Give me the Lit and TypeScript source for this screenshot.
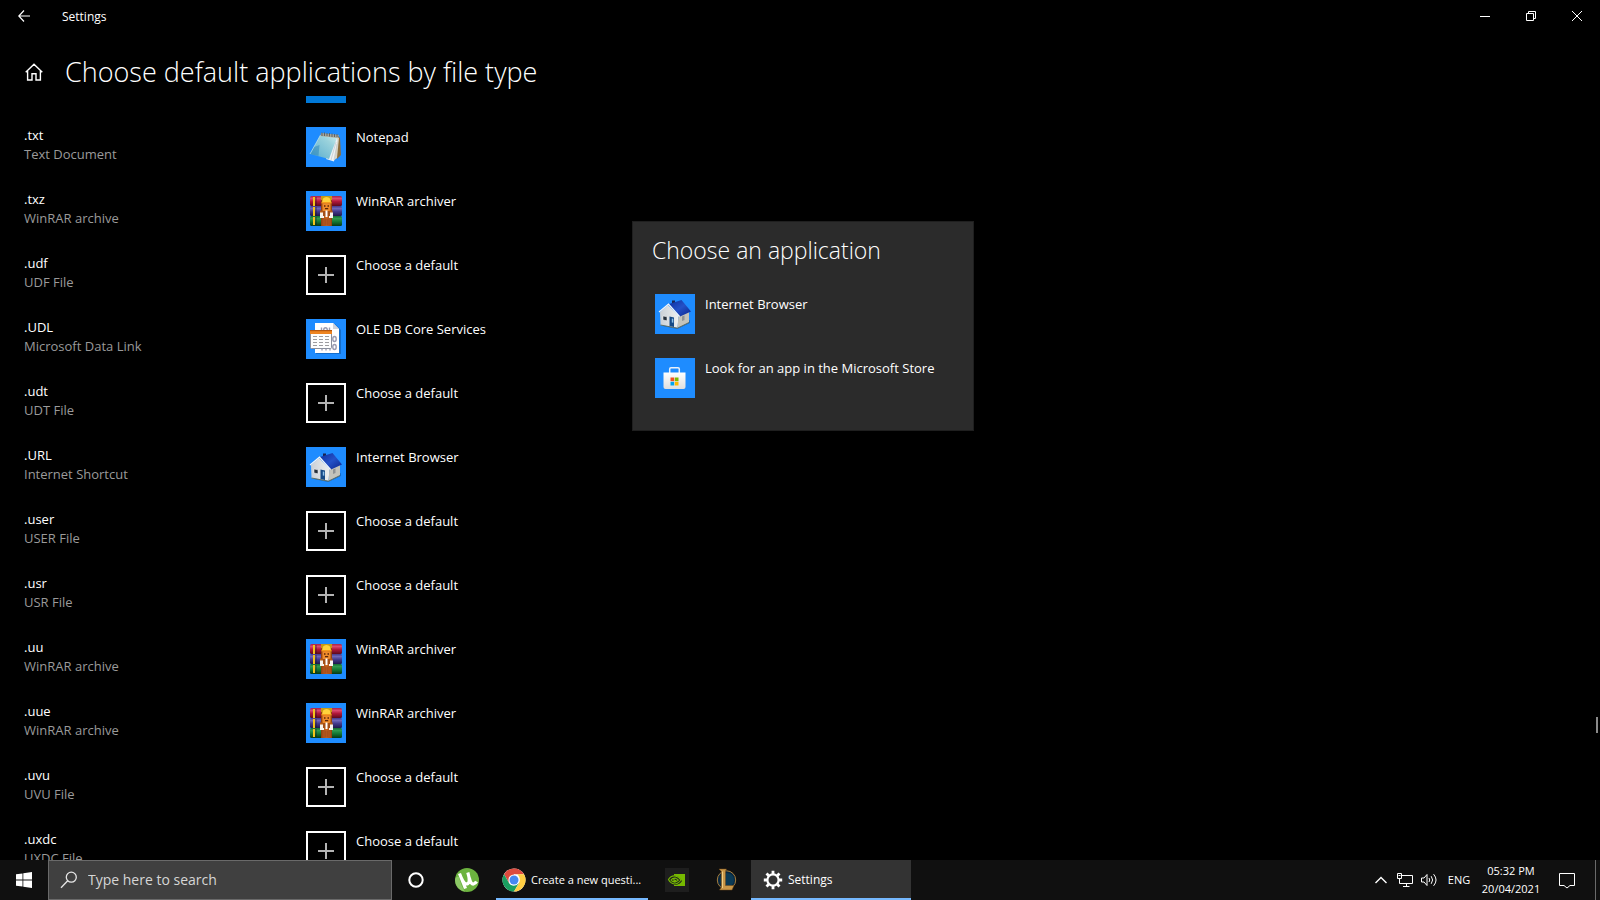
import { LitElement, html, css, svg } from "lit";
import { customElement, property } from "lit/decorators.js";

type IconName = "notepad" | "winrar" | "oledb" | "house" | "store" | "add";

const art: Record<IconName, unknown> = {
  notepad: svg`
    <defs>
      <linearGradient id="sheet" x1="0" y1="1" x2="1" y2="0">
        <stop offset="0" stop-color="#4fa9cf"/><stop offset=".35" stop-color="#79bfd4"/>
        <stop offset=".7" stop-color="#9ad2dc"/><stop offset="1" stop-color="#cfeef0"/>
      </linearGradient>
    </defs>
    <path d="M31 8L34 11L35 28L31 32Z" fill="#8a6d3d"/>
    <path d="M30 9L33 11L31 31L27 34Z" fill="#d9d4c6"/>
    <path d="M30 10L31.500 13L28 34.500L20 32Z" fill="#eef2f4"/>
    <path d="M30 15L25 33M31 17L28 33" stroke="#b8bfc4" stroke-width=".6"/>
    <path d="M14.500 8L31.500 9.500L23 32L4 27Z" fill="url(#sheet)"/>
    <path d="M13.500 18L12.500 29L4 27L8 20Z" fill="#1473b4" opacity=".4"/>
    <path d="M4 27L14.500 8" stroke="#c4e6ec" stroke-width=".7"/>
    <path d="M15 6L33 8L31.500 11L14.500 9Z" fill="#a9a495"/>
    <path d="M16 5.500V9M18.500 5.500V9M21 6V9M23.500 6V9.500M26 6.500V10M28.500 7V10M31 7V10" stroke="#5d6468" stroke-width="1"/>
  `,
  winrar: svg`
    <defs>
      <linearGradient id="red" x2="0" y2="1"><stop offset="0" stop-color="#a82246"/><stop offset=".25" stop-color="#d94a70"/><stop offset=".55" stop-color="#b0183a"/><stop offset="1" stop-color="#5c0a1e"/></linearGradient>
      <linearGradient id="violet" x2="0" y2="1"><stop offset="0" stop-color="#453a8c"/><stop offset=".25" stop-color="#6f66b8"/><stop offset=".55" stop-color="#433a8c"/><stop offset="1" stop-color="#1f184c"/></linearGradient>
      <linearGradient id="green" x2="0" y2="1"><stop offset="0" stop-color="#146c34"/><stop offset=".25" stop-color="#2f9a4e"/><stop offset=".55" stop-color="#147a36"/><stop offset="1" stop-color="#063814"/></linearGradient>
      <linearGradient id="belt" x2="1" y2="0"><stop offset="0" stop-color="#8e3f0e"/><stop offset=".5" stop-color="#cf6a22"/><stop offset="1" stop-color="#8e3f0e"/></linearGradient>
    </defs>
    <rect x="4" y="5" width="32" height="10" rx="1.500" fill="url(#red)"/>
    <rect x="4" y="15" width="32" height="10" rx="1.500" fill="url(#violet)"/>
    <rect x="4" y="25" width="32" height="10" rx="1.500" fill="url(#green)"/>
    <path d="M7 6h2v9H7zM7 16h2v9H7zM7 26h2v8H7z" fill="#f3c41c"/>
    <path d="M10 6v9M10 16v9M10 26v8" stroke="#1a1020" stroke-width=".6"/>
    <rect x="15" y="5" width="11" height="30" fill="url(#belt)"/>
    <path d="M15 5h11v4q-5.500-1-11 0z" fill="#c99a14"/>
    <path d="M16 12q0-6 4.500-6T25 12z" fill="#ffd23c"/>
    <path d="M15.500 11h10v1.500h-10z" fill="#f59a1c"/>
    <path d="M16.500 12.500h8V20h-8z" fill="#ee8a2a"/>
    <path d="M18 14.200h1.500v1.500H18zM21.500 14.200H23v1.500h-1.500zM19 17h3.200v1.200H19z" fill="#5a2408"/>
    <path d="M14 19.500h3V23h-3zM23.500 19.500h3V23h-3z" fill="#b65a16"/>
    <path d="M14 21.500h4V27h-4zM23 21.500h4V27h-4z" fill="#f6f3ee"/>
    <path d="M17 20h7v5h-7z" fill="#a4501a"/>
    <path d="M19.500 19.500h2v6.500h-2z" fill="#fff"/>
    <path d="M16.500 27.500h8.500v7h-8.500z" fill="#a9501a"/>
    <path d="M18 28v6M20.500 28v6M23 28v6" stroke="#b85c20" stroke-width=".6"/>
  `,
  oledb: svg`
    <path d="M10 5H29L35 11V35H10Z" fill="#0c4f98" opacity=".5"/>
    <path d="M9 4H27L33 10V34H9Z" fill="#fff"/>
    <path d="M27 4V10H33Z" fill="#cfd3dc"/>
    <g fill="none" stroke="#9a9cb2" stroke-width="1.400">
      <path d="M15.500 8.500V12M23.500 8.500V12"/><ellipse cx="19.500" cy="11" rx="1.800" ry="2.200"/>
      <ellipse cx="28.500" cy="20" rx="1.700" ry="2.500"/>
      <path d="M16 31.500V28M20 31.500V28M24 31.500V26"/><ellipse cx="28.500" cy="28" rx="1.700" ry="2.500"/>
    </g>
    <rect x="4.500" y="11.500" width="21" height="18" rx="1" fill="#fdfdfd" stroke="#8a8f9c"/>
    <path d="M4 11h22v4H4z" fill="#ee8420"/>
    <path d="M4 11h22v1.200H4z" fill="#b5560e"/>
    <path d="M7 17.500h16M7 20.500h16M7 23.500h16M7 26.500h16" stroke="#9c9c9f" stroke-width="1" stroke-dasharray="4 2"/>
  `,
  house: svg`
    <defs>
      <linearGradient id="roof" x1="0" y1="0" x2="1" y2="1"><stop offset="0" stop-color="#0c2e9c"/><stop offset=".5" stop-color="#2451c8"/><stop offset="1" stop-color="#0a248c"/></linearGradient>
      <linearGradient id="wall" x2="1" y2="0"><stop offset="0" stop-color="#c9cfd6"/><stop offset="1" stop-color="#eef0ef"/></linearGradient>
    </defs>
    <path d="M8 32L22 35L35 29L35 26L22 32Z" fill="#0a4f98" opacity=".55"/>
    <path d="M17 6.500h3v5h-3z" fill="#1b2350"/>
    <path d="M5 18L13 11L23.500 22L22.500 34L5.500 31Z" fill="url(#wall)"/>
    <path d="M23.500 21L34 17L34 28.500L22.500 34Z" fill="#c3c3bb"/>
    <path d="M14 10L26.500 6L36 17.500L25 22.500Z" fill="url(#roof)"/>
    <path d="M4 18L13.500 10L24.500 22.500" fill="none" stroke="#f4f6f8" stroke-width="1.200"/>
    <path d="M8 22l4 .8v4l-4-.8z" fill="#26303c" stroke="#fff" stroke-width=".5"/>
    <path d="M14.500 22.500l4.500 1v9.500l-4.500-.8z" fill="#164a86"/>
    <path d="M16.800 24.500l1.500.3v4l-1.500-.3z" fill="#8fc2ea"/>
    <path d="M27 22.500l2.500-1v4.500l-2.500 1z" fill="#8e9294"/>
    <path d="M5.500 31L22.500 34.200L34 28.500" fill="none" stroke="#5f7068" stroke-width="1"/>
  `,
  store: svg`
    <defs><linearGradient id="bag" x2="0" y2="1"><stop offset="0" stop-color="#fff"/><stop offset="1" stop-color="#dedede"/></linearGradient></defs>
    <path d="M14.700 15V11q0-1.300 1.300-1.300h7q1.300 0 1.300 1.300v4" fill="none" stroke="#e9f1fa" stroke-width="1.500"/>
    <path d="M8.500 14.500H30.500V29q0 2-2 2h-18q-2 0-2-2z" fill="url(#bag)"/>
    <path d="M15.500 19.500h3.700v3.700h-3.700z" fill="#f25022"/><path d="M19.800 19.500h3.700v3.700h-3.700z" fill="#7fba00"/>
    <path d="M15.500 23.800h3.700v3.700h-3.700z" fill="#00a4ef"/><path d="M19.800 23.800h3.700v3.700h-3.700z" fill="#ffb900"/>
  `,
  add: svg`
    <rect x="1" y="1" width="38" height="38" fill="none" stroke="#fff" stroke-width="2"/>
    <path d="M12 20h16M20 12v16" stroke="#b4b4b4" stroke-width="2"/>
  `,
};

@customElement("app-tile")
class AppTile extends LitElement {
  @property() icon: IconName = "add";
  @property() label = "";

  static styles = css`
    :host { display: block; }
    .tile {
      display: flex; gap: 10px; align-items: flex-start; width: 100%;
      padding: 0; border: 0; background: none; color: #fff; text-align: left;
      font: 13px/20px "Open Sans", "Noto Sans", sans-serif;
    }
    .picture { flex: none; width: 40px; height: 40px; background: #1e8cff; }
    .add { background: #000; }
    .label { white-space: nowrap; }
  `;

  render() {
    return html`<button class="tile" type="button">
      <svg class="picture ${this.icon}" viewBox="0 0 40 40" aria-hidden="true">${art[this.icon]}</svg>
      <span class="label">${this.label}</span>
    </button>`;
  }
}

interface FileType { ext: string; kind: string; icon: IconName; app: string; }

const fileTypes: FileType[] = [
  { ext: ".txt", kind: "Text Document", icon: "notepad", app: "Notepad" },
  { ext: ".txz", kind: "WinRAR archive", icon: "winrar", app: "WinRAR archiver" },
  { ext: ".udf", kind: "UDF File", icon: "add", app: "Choose a default" },
  { ext: ".UDL", kind: "Microsoft Data Link", icon: "oledb", app: "OLE DB Core Services" },
  { ext: ".udt", kind: "UDT File", icon: "add", app: "Choose a default" },
  { ext: ".URL", kind: "Internet Shortcut", icon: "house", app: "Internet Browser" },
  { ext: ".user", kind: "USER File", icon: "add", app: "Choose a default" },
  { ext: ".usr", kind: "USR File", icon: "add", app: "Choose a default" },
  { ext: ".uu", kind: "WinRAR archive", icon: "winrar", app: "WinRAR archiver" },
  { ext: ".uue", kind: "WinRAR archive", icon: "winrar", app: "WinRAR archiver" },
  { ext: ".uvu", kind: "UVU File", icon: "add", app: "Choose a default" },
  { ext: ".uxdc", kind: "UXDC File", icon: "add", app: "Choose a default" },
];

@customElement("task-bar")
class TaskBar extends LitElement {
  static styles = css`
    :host { display: block; }
    .bar {
      display: flex; height: 40px; background: #101010; color: #fff;
      font: 11px/18px "Open Sans", "Noto Sans", sans-serif;
    }
    button {
      display: flex; align-items: center; justify-content: center;
      padding: 0; border: 0; background: none; color: inherit; font: inherit;
    }
    svg { display: block; flex: none; }
    .square { width: 48px; }
    .wide { width: 52px; }
    .search {
      display: flex; align-items: center; gap: 10px; box-sizing: border-box;
      width: 344px; padding: 0 11px; background: #404040; border: 1px solid #6a6a6a;
    }
    .query {
      flex: 1; min-width: 0; padding: 0; border: 0; background: none; outline: 0; color: #fff;
      font: 14px/20px "Open Sans", "Noto Sans", sans-serif;
    }
    .query::placeholder { color: #d6d6d6; opacity: 1; }
    .apps { display: flex; gap: 1px; flex: 1; min-width: 0; }
    .window {
      gap: 5px; justify-content: flex-start; box-sizing: border-box;
      padding: 2px 4px 0 6px; border-bottom: 2px solid #76b9ff; white-space: nowrap;
    }
    .chrome { width: 152px; margin: 0 4px 0 2px; }
    .settings { width: 160px; padding-left: 12px; background: #333; font-size: 12px; }
    .tray { display: flex; align-items: stretch; }
    .small { width: 24px; }
    .lang { width: 36px; }
    .clock { display: flex; flex-direction: column; width: 68px; }
    .note { width: 44px; margin-right: 6px; }
    .peek { width: 4px; border-left: 1px solid #6a6a6a; }
  `;

  render() {
    return html`<footer class="bar">
      <button class="square" aria-label="Start">
        <svg width="16" height="16" viewBox="0 0 16 16" fill="#fff"><path d="M0 2.300L6.500 1.400V7.600H0zM7.300 1.300L16 0V7.600H7.300zM0 8.400H6.500V14.600L0 13.700zM7.300 8.400H16V16L7.300 14.700z"/></svg>
      </button>
      <label class="search">
        <svg width="18" height="18" viewBox="0 0 18 18" fill="none" stroke="#e6e6e6" stroke-width="1.300"><circle cx="11.300" cy="6.200" r="5"/><path d="M7.700 9.800L1 16.800"/></svg>
        <input class="query" type="text" placeholder="Type here to search" aria-label="Search">
      </label>
      <nav class="apps">
        <button class="square" aria-label="Cortana">
          <svg width="16" height="16" viewBox="0 0 16 16"><circle cx="8" cy="8" r="6.700" fill="none" stroke="#fff" stroke-width="2"/></svg>
        </button>
        <button class="wide" aria-label="uTorrent">
          <svg width="24" height="24" viewBox="0 0 24 24"><circle cx="12" cy="12" r="12" fill="#6cb33f"/><path d="M0 12A12 12 0 0 0 10 23.800Q6 18 4 9Q1 8 0 12Z" fill="#8cc866"/>
            <path d="M4.500 5.500L10.500 20.500M6.500 10.500Q9.500 17.500 13 15.500Q15.500 13.500 12.800 4.500M14.300 10Q16 16.500 18.500 16Q20.500 15.500 21.500 13.500" fill="none" stroke="#fff" stroke-width="3.200"/></svg>
        </button>
        <button class="window chrome">
          <svg width="24" height="24" viewBox="0 0 24 24"><circle cx="12" cy="12" r="11.500" fill="#fff"/>
            <path d="M12 12L2.040 6.250A11.500 11.500 0 0 1 21.960 6.250H12Z" fill="#dd4b3e"/><path d="M2.040 6.250L7 14.900L12 12L12 6.250Z" fill="#dd4b3e"/>
            <path d="M2.040 6.250A11.500 11.500 0 0 0 12 23.500L17 14.900L12 17.500Q8.500 17.500 7 14.900Z" fill="#1a9f60"/>
            <path d="M21.960 6.250A11.500 11.500 0 0 1 12 23.500L17 14.900Q19 10 15.500 6.250Z" fill="#ffce43"/>
            <circle cx="12" cy="12" r="5.600" fill="#fff"/><circle cx="12" cy="12" r="4.500" fill="#4688f1"/></svg>
          <span>Create a new questi...</span>
        </button>
        <button class="square" aria-label="NVIDIA">
          <svg width="24" height="24" viewBox="0 0 24 24"><rect width="24" height="24" fill="#1e1e1e"/><path d="M9 6H20V18H9Z" fill="#76b900"/>
            <path d="M9 8Q5 8.500 3 12Q6 17 10.500 17Q15 16.500 17 13Q14 7.500 9 7.800Z" fill="#1e1e1e"/>
            <g fill="none" stroke="#76b900" stroke-width="1.200"><path d="M3.500 11.500Q6 7.500 10 8Q14 8.500 16 12Q13 16 9.500 16Q5.500 15.500 3.500 11.500Z"/><path d="M6 12Q8 9.500 10.500 10.200Q12.500 11 13.300 12.200Q11 14.500 9 14Q7 13.500 6 12ZM9 10.500V13Q10.500 13 11 12"/></g></svg>
        </button>
        <button class="square" aria-label="League of Legends">
          <svg width="24" height="24" viewBox="0 0 24 24"><circle cx="12.500" cy="12" r="9.200" fill="#08263f" stroke="#a77e3d" stroke-width="1"/><circle cx="13" cy="12" r="7" fill="#0b3a55"/>
            <path d="M5 1H12.500L11.500 3V17.500H20L18 22H5.500L7.300 19.500V3.500Z" fill="#c99748" stroke="#6a4618" stroke-width=".5"/><path d="M8.500 3.500V20" stroke="#f0cf86" stroke-width="1"/></svg>
        </button>
        <button class="window settings">
          <svg width="20" height="20" viewBox="0 0 20 20" fill="none" stroke="#fff"><circle cx="10" cy="10" r="5.600" stroke-width="2.200"/>
            <path d="M10 .8V4M10 16v3.200M.8 10H4M16 10h3.200M3.500 3.500L5.800 5.800M14.200 14.200L16.500 16.500M3.500 16.500L5.800 14.200M14.200 5.800L16.500 3.500" stroke-width="2.800"/></svg>
          <span>Settings</span>
        </button>
      </nav>
      <div class="tray">
        <button class="small" aria-label="Show hidden icons"><svg width="14" height="14" viewBox="0 0 14 14" fill="none" stroke="#fff" stroke-width="1.400"><path d="M1.500 10L7 4.500L12.500 10"/></svg></button>
        <button class="small" aria-label="Network"><svg width="16" height="14" viewBox="0 0 16 14" fill="none" stroke="#fff"><path d="M5 2.500H15.500V10.500H3.500M9.500 10.500V13M6 13.500H12.500M.5.500H4.500V5.500H.5ZM2.500 5.500V10.500H4M1.500 2.500h2"/></svg></button>
        <button class="small" aria-label="Volume"><svg width="17" height="14" viewBox="0 0 17 14" fill="none" stroke="#fff"><path d="M.5 5H3L6 1.500V12.500L3 9H.5Z"/><path d="M8 5Q9.500 7 8 9M10.200 3.200Q13 7 10.200 10.800M12.600 1.200Q17.500 7 12.600 12.800"/></svg></button>
        <button class="lang">ENG</button>
        <button class="clock"><span>05:32 PM</span><span>20/04/2021</span></button>
        <button class="note" aria-label="Notifications"><svg width="16" height="17" viewBox="0 0 16 17" fill="none" stroke="#fff"><path d="M.5 1.500H15.500V13.500H11L8 16L5 13.500H.5Z"/></svg></button>
        <div class="peek"></div>
      </div>
    </footer>`;
  }
}

@customElement("app-root")
class AppRoot extends LitElement {
  static styles = css`
    :host {
      display: flex; flex-direction: column; position: relative; height: 100vh; overflow: hidden;
      background: #000; color: #fff; font: 13px/19px "Open Sans", "Noto Sans", sans-serif;
    }
    button { display: flex; align-items: center; justify-content: center; padding: 0; border: 0; background: none; }
    svg { display: block; }
    .titlebar { display: flex; align-items: center; height: 32px; flex: none; }
    .back { width: 48px; height: 32px; }
    .caption { flex: 1; padding-left: 14px; font-size: 12px; }
    .control { width: 46px; height: 32px; }
    .header { display: flex; align-items: center; box-sizing: border-box; height: 64px; flex: none; padding-top: 16px; }
    .home { width: 65px; height: 40px; padding-left: 2px; }
    .heading { margin: 0; font-size: 27px; line-height: 32px; font-weight: 300; }
    .body { display: flex; flex: 1; min-height: 0; justify-content: space-between; }
    .list { flex: 1; margin: 0; padding: 0 0 0 24px; list-style: none; overflow: hidden; }
    .sliver { width: 40px; height: 7px; margin: 0 0 24px 282px; background: #0078d7; }
    .row { display: grid; grid-template-columns: 272px 240px; column-gap: 10px; height: 64px; }
    .names { display: flex; flex-direction: column; margin-top: -1px; }
    .kind { color: #9a9a9a; }
    .scroll { flex: none; align-self: flex-start; width: 2px; height: 16px; margin: 621px 2px 0 0; background: #8a8a8a; }
    .dialog {
      position: absolute; top: 221px; left: 39.5%; box-sizing: border-box; width: 342px; height: 210px;
      padding: 11px 19px; background: #2b2b2b; border: 1px solid #1f1f1f;
    }
    .question { margin: 0 0 27px; font-size: 23px; line-height: 34px; font-weight: 300; }
    .choices { display: grid; gap: 24px; padding-left: 3px; }
  `;

  render() {
    return html`
      <div class="titlebar">
        <button class="back" aria-label="Back"><svg width="12" height="12" viewBox="0 0 12 12" fill="none" stroke="#fff" stroke-width="1.200"><path d="M12 6H1M6 .5L.8 6L6 11.500"/></svg></button>
        <span class="caption">Settings</span>
        <button class="control" aria-label="Minimize"><svg width="10" height="10" viewBox="0 0 10 10" stroke="#fff"><path d="M0 5.500H10"/></svg></button>
        <button class="control" aria-label="Restore"><svg width="10" height="10" viewBox="0 0 10 10" fill="none" stroke="#fff"><path d="M.5 2.500H7.500V9.500H.5ZM2.500 2.500V.5H9.500V7.500H7.500"/></svg></button>
        <button class="control" aria-label="Close"><svg width="10" height="10" viewBox="0 0 10 10" stroke="#fff"><path d="M0 0L10 10M10 0L0 10"/></svg></button>
      </div>
      <header class="header">
        <button class="home" aria-label="Home"><svg width="18" height="18" viewBox="0 0 18 18" fill="none" stroke="#fff" stroke-width="1.400"><path d="M.7 9.300L9 1.200L17.300 9.300M2.600 8V17H7V10.700H11V17H15.400V8"/></svg></button>
        <h1 class="heading">Choose default applications by file type</h1>
      </header>
      <main class="body">
        <ul class="list">
          <li class="sliver"></li>
          ${fileTypes.map((t) => html`<li class="row">
            <div class="names"><span>${t.ext}</span><span class="kind">${t.kind}</span></div>
            <app-tile .icon=${t.icon} .label=${t.app}></app-tile>
          </li>`)}
        </ul>
        <div class="scroll"></div>
      </main>
      <section class="dialog" role="dialog" aria-label="Choose an application">
        <h2 class="question">Choose an application</h2>
        <div class="choices">
          <app-tile .icon=${"house"} .label=${"Internet Browser"}></app-tile>
          <app-tile .icon=${"store"} .label=${"Look for an app in the Microsoft Store"}></app-tile>
        </div>
      </section>
      <task-bar></task-bar>
    `;
  }
}
